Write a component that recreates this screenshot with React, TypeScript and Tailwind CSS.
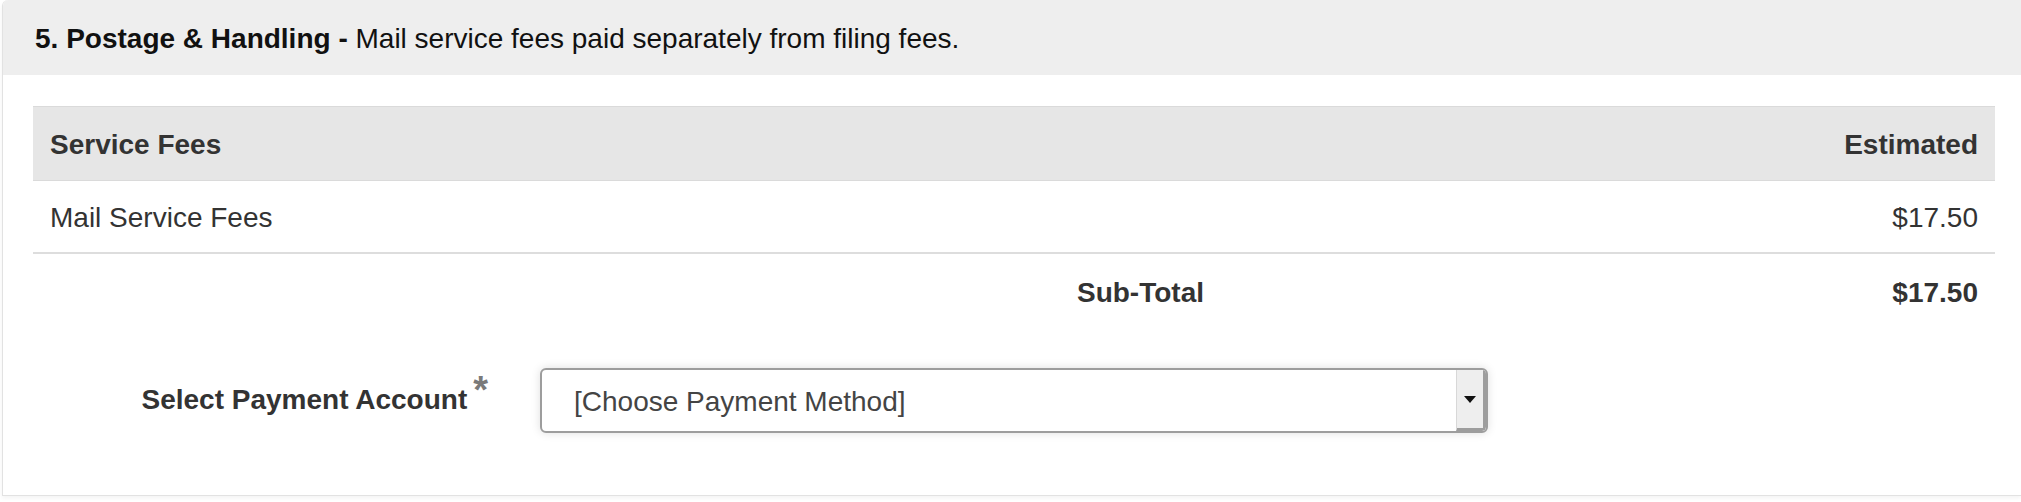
export default function App() {
  return (
    <div className="w-[2021px] h-[502px] bg-white font-['Liberation_Sans',Arial,sans-serif] text-[28px]">
      <div className="ml-[2px] h-[496px] rounded-tl-[6px] border-l border-b border-[#e2e2e2] shadow-[0_2px_4px_rgba(0,0,0,0.05)] overflow-hidden">
        <div className="h-[75px] bg-[#eeeeee] flex items-center pl-[32px] pt-[2px] text-[#111]">
          <span className="font-bold">5. Postage &amp; Handling -</span>
          <span>&nbsp;Mail service fees paid separately from filing fees.</span>
        </div>
        <div className="pl-[30px] pr-[26px] pt-[31px]">
          <FeeTable />
          <div className="flex items-start mt-[39px]">
            <div className="w-[455px] mt-[9px] text-right font-bold text-[#333] leading-[42px]">
              Select Payment Account
              <span className="relative top-[-6px] ml-[6px] text-[#7a7a7a] text-[38px] font-bold leading-none">*</span>
            </div>
            <PaymentSelect />
          </div>
        </div>
      </div>
    </div>
  );
}

function FeeTable() {
  return (
    <div className="text-[#333]">
      <div className="h-[75px] bg-[#e6e6e6] border-t border-b border-[#dadada] flex items-center justify-between px-[17px] pt-[2px] font-bold">
        <span>Service Fees</span>
        <span>Estimated</span>
      </div>
      <div className="h-[73px] border-b-2 border-[#dddddd] flex items-center justify-between px-[17px] pt-[2px]">
        <span>Mail Service Fees</span>
        <span>$17.50</span>
      </div>
      <div className="h-[75px] flex items-center pt-[2px] font-bold">
        <div className="w-[1188px] text-right pr-[17px]">Sub-Total</div>
        <div className="flex-1 text-right pr-[17px]">$17.50</div>
      </div>
    </div>
  );
}

function PaymentSelect() {
  return (
    <div className="ml-[52px] w-[948px] h-[65px] rounded-[6px] border-2 border-[#9d9d9d] bg-white shadow-[0_0_10px_rgba(0,0,0,0.13)] flex overflow-hidden">
      <div className="flex-1 flex items-center pl-[32px] pt-[3px] text-[#444]">[Choose Payment Method]</div>
      <div className="w-[30px] bg-[#eeeeee] border-l border-[#d8d8d8] border-r-[3px] border-b-[3px] border-r-[#9d9d9d] border-b-[#9d9d9d] rounded-br-[4px] flex items-center justify-center">
        <svg width="12" height="7" viewBox="0 0 12 7">
          <path d="M0 0 L12 0 L6 7 Z" fill="#111" />
        </svg>
      </div>
    </div>
  );
}
